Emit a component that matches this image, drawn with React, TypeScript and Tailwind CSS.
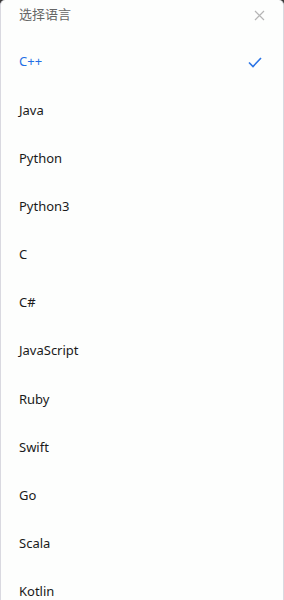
import React, { useState } from "react";

const LANGS = [
  "C++",
  "Java",
  "Python",
  "Python3",
  "C",
  "C#",
  "JavaScript",
  "Ruby",
  "Swift",
  "Go",
  "Scala",
  "Kotlin",
];

export default function App() {
  const [selected, setSelected] = useState("C++");

  return (
    <div className="w-[284px] h-[600px] bg-[#3a3a3a] overflow-hidden">
      <div
        className="h-full bg-[#fdfefd] rounded-t-[5px] border-x border-[#d9d9e0] overflow-hidden"
        style={{ fontFamily: '"Noto Sans", "Noto Sans CJK SC", sans-serif' }}
      >
        {/* header */}
        <div className="h-[38px] pb-[8px] pl-[18px] pr-[18px] flex items-center justify-between">
          <span className="text-[13px] text-[#666]">选择语言</span>
          <button className="text-[#b5b5b5]" aria-label="close">
            <svg width="11" height="11" viewBox="0 0 11 11" fill="none" stroke="currentColor" strokeWidth="1.2">
              <path d="M1 1l9 9M10 1l-9 9" />
            </svg>
          </button>
        </div>

        {/* list */}
        <ul>
          {LANGS.map((lang) => (
            <li
              key={lang}
              onClick={() => setSelected(lang)}
              className="h-[48.2px] pl-[18px] pr-[21px] flex items-center justify-between cursor-pointer"
            >
              <span className={selected === lang ? "text-[13px] text-[#1f6fe5]" : "text-[13px] text-[#1a1a1a]"}>
                {lang}
              </span>
              {selected === lang && (
                <svg width="14" height="11" viewBox="0 0 14 11" fill="none" stroke="#2a74e6" strokeWidth="1.6">
                  <path d="M1 5.5l4 4L13 1" />
                </svg>
              )}
            </li>
          ))}
        </ul>
      </div>
    </div>
  );
}
